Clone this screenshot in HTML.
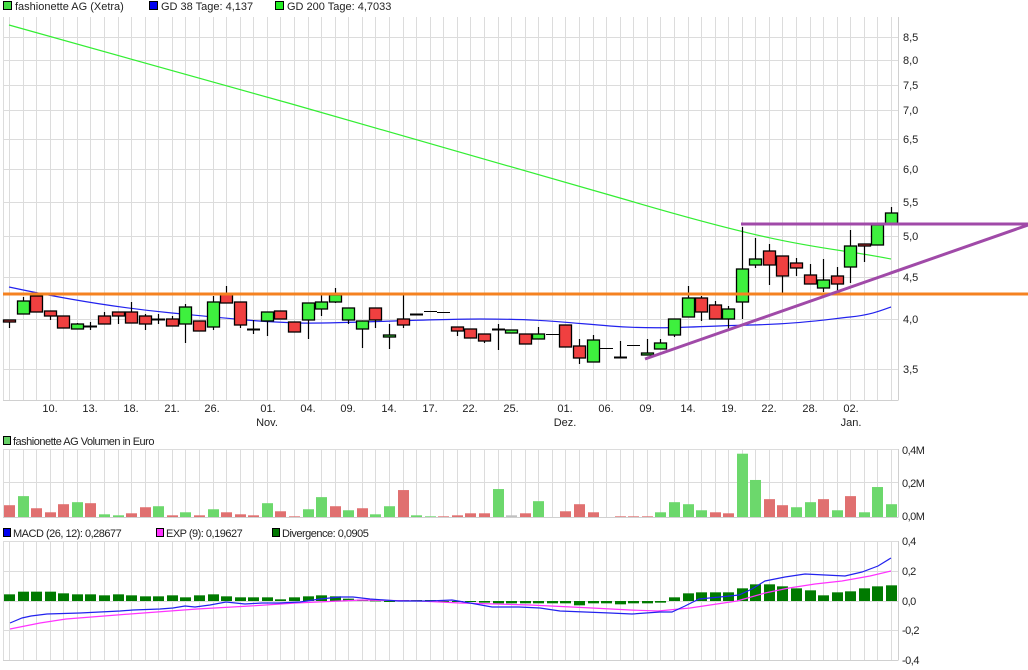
<!DOCTYPE html>
<html><head><meta charset="utf-8"><style>
html,body{margin:0;padding:0;background:#fff}
svg{display:block}
text{font-family:"Liberation Sans",sans-serif;font-size:11px;fill:#222}
.ax{font-size:11px}
.cd{font-size:11px;letter-spacing:-0.5px}
</style></head><body>
<svg id="s" width="1028" height="670" xmlns="http://www.w3.org/2000/svg">
<rect width="1028" height="670" fill="#fff"/>
<g id="grid"></g>
<g id="lines"></g>
<g id="cand"></g>
<g id="over"></g>
<rect x="3.5" y="1.5" width="8" height="8" fill="#44dd44" stroke="#000"/>
<text x="15" y="10">fashionette AG (Xetra)</text>
<rect x="149.5" y="1.5" width="8" height="8" fill="#0000ee" stroke="#000"/>
<text x="161" y="10">GD 38 Tage: 4,137</text>
<rect x="275.5" y="1.5" width="8" height="8" fill="#22ee22" stroke="#000"/>
<text x="287" y="10">GD 200 Tage: 4,7033</text>
<rect x="3.5" y="436.5" width="7" height="8" fill="#66d066" stroke="#000"/>
<text class="cd" x="13" y="445">fashionette AG Volumen in Euro</text>
<rect x="3.5" y="528.5" width="7" height="8" fill="#0000ee" stroke="#000"/>
<text class="cd" x="13" y="537">MACD (26, 12): 0,28677</text>
<rect x="156.5" y="528.5" width="7" height="8" fill="#ff33ff" stroke="#000"/>
<text class="cd" x="166" y="537">EXP (9): 0,19627</text>
<rect x="272.5" y="528.5" width="7" height="8" fill="#007700" stroke="#000"/>
<text class="cd" x="282" y="537">Divergence: 0,0905</text>
<g class="ax">
<text x="903" y="41">8,5</text><text x="903" y="64">8,0</text><text x="903" y="89">7,5</text>
<text x="903" y="114">7,0</text><text x="903" y="143">6,5</text><text x="903" y="173">6,0</text>
<text x="903" y="206">5,5</text><text x="903" y="240">5,0</text><text x="903" y="281">4,5</text>
<text x="903" y="323">4,0</text><text x="903" y="373">3,5</text>
<text class="cd" x="902" y="454">0,4M</text><text class="cd" x="902" y="487">0,2M</text><text class="cd" x="902" y="520">0,0M</text>
<text class="cd" x="902" y="545">0,4</text><text class="cd" x="902" y="575">0,2</text><text class="cd" x="902" y="605">0,0</text>
<text class="cd" x="902" y="634">-0,2</text><text class="cd" x="902" y="664">-0,4</text>
</g>
<g text-anchor="middle">
<text x="50" y="412">10.</text><text x="90" y="412">13.</text><text x="131" y="412">18.</text>
<text x="172" y="412">21.</text><text x="212" y="412">26.</text><text x="268" y="412">01.</text>
<text x="308" y="412">04.</text><text x="348" y="412">09.</text><text x="389" y="412">14.</text>
<text x="430" y="412">17.</text><text x="470" y="412">22.</text><text x="511" y="412">25.</text>
<text x="565" y="412">01.</text><text x="606" y="412">06.</text><text x="647" y="412">09.</text>
<text x="688" y="412">14.</text><text x="729" y="412">19.</text><text x="769" y="412">22.</text>
<text x="810" y="412">28.</text><text x="851" y="412">02.</text>
<text x="267" y="426">Nov.</text><text x="565" y="426">Dez.</text><text x="851" y="426">Jan.</text>
</g>
</svg>
<script>
var NS="http://www.w3.org/2000/svg";
function el(p,t,a){var e=document.createElementNS(NS,t);for(var k in a)e.setAttribute(k,a[k]);document.getElementById(p).appendChild(e);return e;}
function X(i){return 9+13.57*i;}
var panels=[[17,400],[449,517],[541,660]];
panels.forEach(function(p){
 for(var i=0;i<66;i++){var x=Math.round(X(i))+0.5;el("grid","line",{x1:x,x2:x,y1:p[0],y2:p[1],stroke:"#dcdcdc"});}
 el("grid","line",{x1:898.5,x2:898.5,y1:p[0],y2:p[1],stroke:"#d0d0d0"});
 el("grid","line",{x1:3,x2:898.5,y1:p[1]+0.5,y2:p[1]+0.5,stroke:"#d0d0d0"});
 el("grid","line",{x1:3.5,x2:3.5,y1:p[0],y2:p[1],stroke:"#dcdcdc"});
});
[37,60,85,110,139,169,202,236,277,319,369].forEach(function(y){el("grid","line",{x1:3,x2:898,y1:y+0.5,y2:y+0.5,stroke:"#dcdcdc"});});
[449,482].forEach(function(y){el("grid","line",{x1:3,x2:898,y1:y+0.5,y2:y+0.5,stroke:"#dcdcdc"});});
[541,571,601,630].forEach(function(y){el("grid","line",{x1:3,x2:898,y1:y+0.5,y2:y+0.5,stroke:"#dcdcdc"});});
el("lines","path",{d:"M9,25 C200,78 450,148 627,200 S820,245 891,259",fill:"none",stroke:"#33ee33","stroke-width":1.2});
el("lines","path",{d:"M9,287 C60,298 120,308 172,313 S260,322 300,323 S420,319 480,319 S560,322 610,326 S700,326 750,325 S830,319 850,317 S880,311 891,307",fill:"none",stroke:"#2222ee","stroke-width":1.2});
var C=[["r",320,322,320,328],["g",301,314,297,314],["r",296,312,294,312],["r",311,316,311,320],["r",316,328,316,328],["g",324,329,323,329],["d",326,326,322,330],["r",316,324,312,324],["r",312,316,312,324],["r",312,323,302,323],["r",316,324,314,330],["d",319,319,314,324],["r",319,326,316,326],["g",307,324,304,343],["r",321,331,321,331],["g",302,327,296,330],["r",294,303,286,303],["r",302,325,302,328],["d",329,329,320,334],["g",312,321,312,336],["r",311,319,311,319],["r",322,332,322,332],["g",303,320,303,339],["g",302,309,295,316],["g",295,302,288,303],["g",308,320,308,324],["g",321,329,321,348],["r",308,320,308,328],["g",335,337,324,349],["r",319,325,295,328],["d",314,314,314,314],["f",311,311,311,311],["f",312,312,312,312],["r",327,331,327,336],["r",329,338,329,338],["r",334,341,334,343],["d",329,329,324,350],["g",330,333,330,333],["r",334,344,334,344],["g",334,339,327,339],["f",334,334,334,334],["r",325,347,325,347],["r",346,358,339,364],["g",340,362,335,362],["f",348,348,348,348],["d",357,357,341,357],["f",345,345,345,345],["g",353,355,339,355],["g",343,349,339,349],["g",319,335,319,337],["g",298,317,286,317],["r",298,312,296,321],["r",305,319,301,319],["g",309,319,306,329],["g",269,302,227,319],["g",259,265,238,268],["r",251,265,244,285],["r",256,276,256,293],["r",263,268,258,276],["r",275,284,264,284],["g",280,288,259,292],["r",276,284,267,292],["g",246,267,230,283],["r",244,246,244,262],["g",225,245,225,245],["g",213,224,207,224]];
C.forEach(function(c,i){var x=X(i),xr=Math.round(x)+0.5;
 if(c[4]>c[3])el("cand","line",{x1:xr,x2:xr,y1:c[3],y2:c[4],stroke:"#000","stroke-width":1.2});
 if(c[0]=="r"||c[0]=="g"){el("cand","rect",{x:Math.round(x)-5.5,y:c[1],width:12,height:Math.max(c[2]-c[1],2),fill:c[0]=="r"?"#f04040":"#3ef03e",stroke:"#000","stroke-width":1.3});}
 else{el("cand","line",{x1:Math.round(x)-6,x2:Math.round(x)+7,y1:c[1]+0.5,y2:c[1]+0.5,stroke:"#000","stroke-width":c[0]=="d"?2:1});}
});
el("over","line",{x1:3,x2:1028,y1:294,y2:294,stroke:"#f58220","stroke-width":3});
el("over","line",{x1:741,x2:1028,y1:224,y2:224,stroke:"#a04aa8","stroke-width":3});
el("over","line",{x1:645,x2:1028,y1:359,y2:225,stroke:"#a04aa8","stroke-width":3});
var V=[225,198,234,246,222,216,219,252,255,249,231,228,255,246,255,237,246,252,255,219,243,258,237,201,228,240,234,252,228,180,255,258,258,255,249,249,177,255,249,213,260,243,222,246,260,258,258,258,246,216,222,240,246,249,72,150,207,225,231,216,207,240,198,246,171,222];
var VC="rgrrrgrggrrgrgrgrrrgrrggrgrggrggrrrrgarggrrrgrrrggggrrggrrggrgrgggg".split("");
V.forEach(function(py,i){var h=(260-py)/2.97;if(h<=0)return;var c=VC[i]||"g";
 el("over","rect",{x:Math.round(X(i))-5,y:517-h,width:11,height:h,fill:c=="r"?"#e07070":(c=="a"?"#c0c0c0":"#6cd86c")});});
var D=[495,487,487,487,492,495,495,498,495,498,501,501,498,504,498,495,501,504,504,504,510,504,501,498,501,508,511,513,518,512,512,512,518,518,518,520,522,522,522,522,522,522,528,522,522,525,522,522,520,504,492,489,489,489,477,465,465,471,477,483,498,489,486,477,471,468];
D.forEach(function(py,i){var h=(515-py)/3;el("over","rect",{x:Math.round(X(i))-5,y:h>0?601-h:601,width:11,height:Math.max(Math.abs(h),1),fill:"#007a00"});});
el("over","polyline",{points:"10,629 40,623 66,619 130,614 197,609 250,606 296,603 362,600 420,601 460,603 530,605 592,608 630,610 658,611 690,608 737,601 765,593 789,588 815,584 842,581 870,576 891,571",fill:"none",stroke:"#ff33ff","stroke-width":1.2});
el("over","polyline",{points:"10,623 22,618 31,616 47,614 80,613 100,612 120,611 133,610 160,609 173,608 185,606 195,607 210,605 226,602 245,604 262,603 279,603 300,602 320,599 340,597 353,597 370,599 399,601 430,601 452,600 470,603 492,607 519,607 540,608 560,611 585,612 610,613 632,614 660,612 672,612 685,606 699,599 720,597 739,595 752,589 765,581 785,577 805,574 825,575 845,576 862,572 878,566 891,558",fill:"none",stroke:"#2222ee","stroke-width":1.2});
</script>
</body></html>
